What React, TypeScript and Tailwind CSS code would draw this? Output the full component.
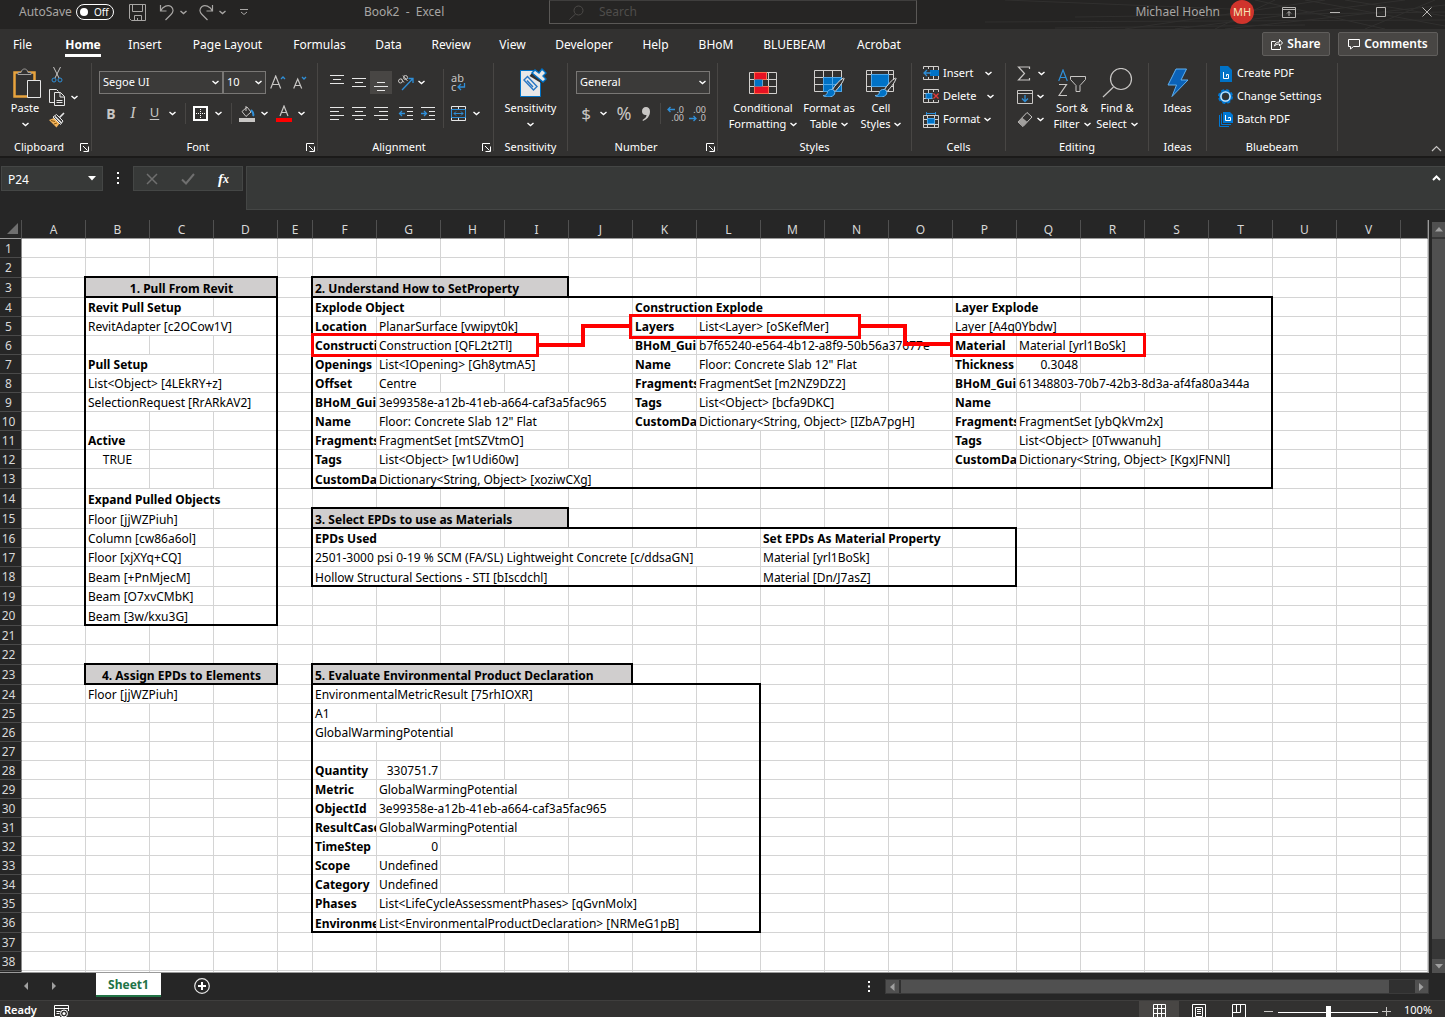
import React from "react";

type Cell = { c: string; t: string; span?: number; b?: boolean; align?: "center" | "right"; fill?: boolean };

const COLS = "ABCDEFGHIJKLMNOPQRSTUVW".split("");
const TALL_ROWS = [2, 3, 13, 14, 15, 18, 20, 22, 23, 36];
const ROWS = Array.from({ length: 39 }, (_, i) => i + 1);

// Outlined ranges: first column, first row, last column, last row.
const BOXES: [string, number, string, number][] = [
  ["B", 3, "D", 3],
  ["B", 4, "D", 20],
  ["F", 3, "I", 3],
  ["F", 4, "T", 13],
  ["F", 15, "I", 15],
  ["F", 16, "P", 18],
  ["B", 23, "D", 23],
  ["F", 23, "J", 23],
  ["F", 24, "L", 36],
];

const h = (c: string, t: string, span = 1): Cell => ({ c, t, span, b: true });
const v = (c: string, t: string, span = 1): Cell => ({ c, t, span });

const DATA: Record<number, Cell[]> = {
  3: [
    { c: "B", t: "1. Pull From Revit", span: 3, b: true, align: "center", fill: true },
    { c: "F", t: "2. Understand How to SetProperty", span: 4, b: true, fill: true },
  ],
  4: [h("B", "Revit Pull Setup", 2), h("F", "Explode Object", 2), h("K", "Construction Explode", 3), h("P", "Layer Explode", 2)],
  5: [
    v("B", "RevitAdapter [c2OCow1V]", 3),
    h("F", "Location"),
    v("G", "PlanarSurface [vwipyt0k]", 3),
    h("K", "Layers"),
    v("L", "List<Layer> [oSKefMer]", 3),
    v("P", "Layer [A4q0Ybdw]", 2),
  ],
  6: [
    h("F", "Construction"),
    v("G", "Construction [QFL2t2Tl]", 3),
    h("K", "BHoM_Guid"),
    v("L", "b7f65240-e564-4b12-a8f9-50b56a37677e", 4),
    h("P", "Material"),
    v("Q", "Material [yrl1BoSk]", 2),
  ],
  7: [
    h("B", "Pull Setup", 2),
    h("F", "Openings"),
    v("G", "List<IOpening> [Gh8ytmA5]", 3),
    h("K", "Name"),
    v("L", 'Floor: Concrete Slab 12" Flat', 3),
    h("P", "Thickness"),
    { c: "Q", t: "0.3048", align: "right" },
  ],
  8: [
    v("B", "List<Object> [4LEkRY+z]", 3),
    h("F", "Offset"),
    v("G", "Centre"),
    h("K", "Fragments"),
    v("L", "FragmentSet [m2NZ9DZ2]", 3),
    h("P", "BHoM_Guid"),
    v("Q", "61348803-70b7-42b3-8d3a-af4fa80a344a", 4),
  ],
  9: [
    v("B", "SelectionRequest [RrARkAV2]", 3),
    h("F", "BHoM_Guid"),
    v("G", "3e99358e-a12b-41eb-a664-caf3a5fac965", 4),
    h("K", "Tags"),
    v("L", "List<Object> [bcfa9DKC]", 3),
    h("P", "Name"),
  ],
  10: [
    h("F", "Name"),
    v("G", 'Floor: Concrete Slab 12" Flat', 3),
    h("K", "CustomData"),
    v("L", "Dictionary<String, Object> [IZbA7pgH]", 4),
    h("P", "Fragments"),
    v("Q", "FragmentSet [ybQkVm2x]", 3),
  ],
  11: [
    h("B", "Active"),
    h("F", "Fragments"),
    v("G", "FragmentSet [mtSZVtmO]", 3),
    h("P", "Tags"),
    v("Q", "List<Object> [0Twwanuh]", 3),
  ],
  12: [
    { c: "B", t: "TRUE", align: "center" },
    h("F", "Tags"),
    v("G", "List<Object> [w1Udi60w]", 3),
    h("P", "CustomData"),
    v("Q", "Dictionary<String, Object> [KgxJFNNl]", 4),
  ],
  13: [h("F", "CustomData"), v("G", "Dictionary<String, Object> [xoziwCXg]", 4)],
  14: [h("B", "Expand Pulled Objects", 3)],
  15: [v("B", "Floor [jjWZPiuh]", 2), { c: "F", t: "3. Select EPDs to use as Materials", span: 4, b: true, fill: true }],
  16: [v("B", "Column [cw86a6ol]", 2), h("F", "EPDs Used", 2), h("M", "Set EPDs As Material Property", 3)],
  17: [
    v("B", "Floor [xjXYq+CQ]", 2),
    v("F", "2501-3000 psi 0-19 % SCM (FA/SL) Lightweight Concrete [c/ddsaGN]", 7),
    v("M", "Material [yrl1BoSk]", 2),
  ],
  18: [v("B", "Beam [+PnMjecM]", 2), v("F", "Hollow Structural Sections - STI [bIscdchl]", 4), v("M", "Material [Dn/J7asZ]", 2)],
  19: [v("B", "Beam [O7xvCMbK]", 2)],
  20: [v("B", "Beam [3w/kxu3G]", 2)],
  23: [
    { c: "B", t: "4. Assign EPDs to Elements", span: 3, b: true, align: "center", fill: true },
    { c: "F", t: "5. Evaluate Environmental Product Declaration", span: 5, b: true, fill: true },
  ],
  24: [v("B", "Floor [jjWZPiuh]", 2), v("F", "EnvironmentalMetricResult [75rhIOXR]", 4)],
  25: [v("F", "A1")],
  26: [v("F", "GlobalWarmingPotential", 3)],
  28: [h("F", "Quantity"), { c: "G", t: "330751.7", align: "right" }],
  29: [h("F", "Metric"), v("G", "GlobalWarmingPotential", 3)],
  30: [h("F", "ObjectId"), v("G", "3e99358e-a12b-41eb-a664-caf3a5fac965", 4)],
  31: [h("F", "ResultCase"), v("G", "GlobalWarmingPotential", 3)],
  32: [h("F", "TimeStep"), { c: "G", t: "0", align: "right" }],
  33: [h("F", "Scope"), v("G", "Undefined")],
  34: [h("F", "Category"), v("G", "Undefined")],
  35: [h("F", "Phases"), v("G", "List<LifeCycleAssessmentPhases> [qGvnMolx]", 5)],
  36: [h("F", "Environment"), v("G", "List<EnvironmentalProductDeclaration> [NRMeG1pB]", 5)],
};

const idx = (c: string) => COLS.indexOf(c);

function edges(first: number, last: number, row: number) {
  let right = false;
  let bottom = false;
  let corner = false;
  for (const [a, r0, z, r1] of BOXES) {
    const c0 = idx(a);
    const c1 = idx(z);
    if (row >= r0 && row <= r1 && (last === c1 || last === c0 - 1)) right = true;
    if (first <= c1 && last >= c0 && (row === r1 || row === r0 - 1)) bottom = true;
    if (last === c0 - 1 && row === r0 - 1) corner = true;
  }
  return { right, bottom, corner };
}

function SheetRow({ row }: { row: number }) {
  const cells: React.ReactNode[] = [];
  const data = DATA[row] || [];
  for (let i = 0; i < COLS.length; ) {
    const cell = data.find((d) => idx(d.c) === i);
    const span = cell?.span ?? 1;
    const e = edges(i, i + span - 1, row);
    const cls = [
      "relative border-r border-b border-[#d4d4d4] p-0",
      e.right ? "after:absolute after:top-0 after:-right-px after:-bottom-px after:w-[2px] after:bg-black" : "",
      e.corner && !e.right ? "after:absolute after:-right-px after:-bottom-px after:h-[2px] after:w-[2px] after:bg-black" : "",
      e.bottom ? "before:absolute before:left-0 before:-right-px before:-bottom-px before:h-[2px] before:bg-black" : "",
      cell?.fill ? "bg-[#d0cece]" : "",
      cell?.b ? "font-bold" : "",
    ].join(" ");
    const align = cell?.align === "center" ? "text-center" : cell?.align === "right" ? "pr-[2px] text-right" : "pl-[2px]";
    cells.push(
      <td key={i} colSpan={span} className={cls}>
        {cell && <div className={"overflow-hidden pt-[2px] leading-4 whitespace-nowrap " + align}>{cell.t}</div>}
      </td>
    );
    i += span;
  }
  return (
    <tr className={TALL_ROWS.includes(row) ? "h-[20px]" : "h-[19px]"}>
      <th
        scope="row"
        className="border-r border-b border-r-[#8c8c8c] border-b-[#4a4a4a] bg-[#262626] p-0 pt-px pr-1 text-center text-[12px] leading-4 font-normal text-[#d8d8d8]"
      >
        {row < 39 ? row : ""}
      </th>
      {cells}
    </tr>
  );
}

function Caret({ className = "text-white" }: { className?: string }) {
  return (
    <svg width="7" height="5" viewBox="0 0 7 5" fill="none" stroke="currentColor" strokeWidth="1.4" className={"shrink-0 " + className}>
      <path d="M.5 1l3 2.5 3-2.5" />
    </svg>
  );
}

function Svg({ w, h, children, className = "" }: { w: number; h: number; children: React.ReactNode; className?: string }) {
  return (
    <svg width={w} height={h} viewBox={`0 0 ${w} ${h}`} fill="none" className={"shrink-0 " + className}>
      {children}
    </svg>
  );
}

function Btn({ label, className = "", children }: { label: string; className?: string; children: React.ReactNode }) {
  return (
    <button type="button" aria-label={label} className={"flex shrink-0 items-center justify-center " + className}>
      {children}
    </button>
  );
}

function Group({ label, width, launcher, children }: { label: string; width: string; launcher?: boolean; children: React.ReactNode }) {
  return (
    <section aria-label={label} className={"flex shrink-0 " + width}>
      <div className="flex min-w-0 flex-1 flex-col">
        <div className="flex h-[77px]">{children}</div>
        <div className="flex h-4 items-center">
          <span className="flex-1 text-center text-[11px] leading-4">{label}</span>
          {launcher && (
            <Btn label={label + " settings"} className="mr-px w-[12px]">
              <Svg w={9} h={9}>
                <path d="M.5 8V.5H8M3 3l4.5 4.5M8.5 3.500v5h-5" stroke="#fff" />
              </Svg>
            </Btn>
          )}
        </div>
      </div>
      <div className="mt-px h-[88px] w-px bg-[#484644]" />
    </section>
  );
}

function Big({ icon, lines, caret, className }: { icon: React.ReactNode; lines: string[]; caret?: boolean; className: string }) {
  return (
    <button type="button" className={"flex shrink-0 flex-col items-center pt-[4px] text-[11px] leading-4 whitespace-nowrap " + className}>
      <span className="flex h-[34px] items-center">{icon}</span>
      {lines.map((l, i) => (
        <span key={i} className="flex h-4 items-center gap-1">
          {l}
          {caret && i === lines.length - 1 && <Caret />}
        </span>
      ))}
    </button>
  );
}

function Small({ icon, label, caret, gap = "gap-1" }: { icon: React.ReactNode; label: string; caret?: boolean; gap?: string }) {
  return (
    <button type="button" className={"flex h-[23px] items-center text-[11px] whitespace-nowrap " + gap}>
      <span className="flex items-center gap-1">
        {icon}
        {label}
      </span>
      {caret && <Caret />}
    </button>
  );
}

function Lines({ rows }: { rows: [number, number, number][] }) {
  return (
    <Svg w={16} h={16}>
      {rows.map(([x, y, w]) => (
        <path key={y} d={`M${x} ${y}.5h${w}`} stroke="#e6e6e6" />
      ))}
    </Svg>
  );
}

const TABS: [string, string][] = [
  ["File", "w-[45px]"],
  ["Home", "w-[76px]"],
  ["Insert", "w-[48px]"],
  ["Page Layout", "w-[117px]"],
  ["Formulas", "w-[67px]"],
  ["Data", "w-[71px]"],
  ["Review", "w-[54px]"],
  ["View", "w-[69px]"],
  ["Developer", "w-[74px]"],
  ["Help", "w-[69px]"],
  ["BHoM", "w-[52px]"],
  ["BLUEBEAM", "w-[105px]"],
  ["Acrobat", "w-[64px]"],
];

function TitleBar() {
  return (
    <header className="relative flex h-[29px] shrink-0 items-start bg-[#252423] text-[12px] text-[#a8a6a4]">
      <svg className="absolute top-0 right-0" width="520" height="29" viewBox="0 0 520 29" fill="none" stroke="#31302f" aria-hidden="true">
        <path d="M80 0L330 10M150 17L520 12M60 22L520 20M130 28L380 25M200 29L400 0M250 29L480 0M300 29L520 5M330 0L460 29M380 0L520 26M420 0L520 16M290 29L350 0M440 29L510 0" />
      </svg>
      <div className="relative flex h-6 w-[549px] shrink-0 items-center">
        <label className="ml-[19px] flex items-center gap-1">
          AutoSave
          <input type="checkbox" className="sr-only" />
          <span className="flex h-[16px] w-[38px] items-center gap-[6px] rounded-full border border-white pl-[3px] text-[10px] text-white">
            <span className="h-[8px] w-[8px] rounded-full bg-white" />
            Off
          </span>
        </label>
        <Btn label="Save" className="ml-[15px]">
          <Svg w={17} h={17}>
            <path d="M.5.5h16v16h-14l-2-2zM3.500.5v7h10v-7M5.500 16.500v-5h7v5M8.500 14v2" stroke="#a8a6a4" />
          </Svg>
        </Btn>
        <Btn label="Undo" className="ml-[13px]">
          <Svg w={16} h={17}>
            <path d="M1.500 1v6h6M1.500 7C4 2 9 .5 12 2.500c3 2.500 2.500 5.500 0 8L6.500 16" stroke="#a8a6a4" strokeWidth="1.200" />
          </Svg>
        </Btn>
        <Caret className="ml-[5px] text-[#a8a6a4]" />
        <Btn label="Redo" className="ml-[11px]">
          <Svg w={16} h={17}>
            <path d="M14.500 1v6h-6M14.500 7C12 2 7 .5 4 2.500c-3 2.500-2.500 5.500 0 8L9.500 16" stroke="#a8a6a4" strokeWidth="1.200" />
          </Svg>
        </Btn>
        <Caret className="ml-[5px] text-[#a8a6a4]" />
        <Btn label="Customize Quick Access Toolbar" className="ml-[14px]">
          <Svg w={8} h={8}>
            <path d="M0 1.500h8M1 4l3 2.500L7 4" stroke="#a8a6a4" />
          </Svg>
        </Btn>
        <h1 className="ml-[116px] whitespace-pre">Book2{"  -  "}Excel</h1>
      </div>
      <label className="relative flex h-6 w-[368px] shrink-0 items-center border border-[#5a5856] border-t-[#3f3e3d] bg-[#262524] pl-[19px]">
        <Svg w={15} h={15}>
          <circle cx="9.500" cy="5.500" r="4.500" stroke="#4c4a48" />
          <path d="M6.500 9L.5 14.500" stroke="#4c4a48" />
        </Svg>
        <span className="sr-only">Search</span>
        <input type="search" placeholder="Search" className="ml-[15px] w-40 bg-transparent outline-none placeholder:text-[#4f4d4b]" />
      </label>
      <div className="relative flex h-6 flex-1 items-center justify-end pr-[13px]">
        <span>Michael Hoehn</span>
        <span className="ml-[10px] flex h-6 w-6 items-center justify-center rounded-full bg-[#d0342c] text-[11px] text-[#f7e3b5]">MH</span>
        <Btn label="Ribbon Display Options" className="ml-[28px]">
          <Svg w={14} h={11}>
            <path d="M.5.5h13v10H.5zM.5 2.500h13M7 9V4.500M5 6.500l2-2 2 2" stroke="#b8b6b4" />
          </Svg>
        </Btn>
        <Btn label="Minimize" className="ml-[34px]">
          <Svg w={10} h={10}>
            <path d="M0 5.500h10" stroke="#b8b6b4" />
          </Svg>
        </Btn>
        <Btn label="Maximize" className="ml-[36px]">
          <Svg w={10} h={10}>
            <path d="M.5.5h9v9h-9z" stroke="#b8b6b4" />
          </Svg>
        </Btn>
        <Btn label="Close" className="ml-[36px]">
          <Svg w={10} h={10}>
            <path d="M.5.5l9 9M9.500.5l-9 9" stroke="#b8b6b4" />
          </Svg>
        </Btn>
      </div>
    </header>
  );
}

function TabBar() {
  return (
    <nav className="flex h-[33px] shrink-0 items-start bg-[#323130]">
      {TABS.map(([t, w]) => (
        <a key={t} href="#" className={"mt-1 flex shrink-0 justify-center text-[12px] whitespace-nowrap " + w}>
          <span className={"flex h-6 items-center border-b-[3px] pt-[2px] " + (t === "Home" ? "border-white font-bold" : "border-transparent")}>{t}</span>
        </a>
      ))}
      <div className="mt-[3px] mr-[7px] ml-auto flex gap-2">
        <button type="button" className="flex h-6 w-[68px] items-center justify-center gap-1 rounded-[2px] border border-[#605e5c] bg-[#484644] text-[12px] font-semibold">
          <Svg w={12} h={12}>
            <path d="M4.500 3.500h-4v8h9v-3M3.500 8c.5-3 2.500-4 5-4V1.500L11.500 5 8.500 8V6C6.500 6 5 6.500 3.500 8z" stroke="#fff" />
          </Svg>
          Share
        </button>
        <button type="button" className="flex h-6 w-[100px] items-center justify-center gap-1 rounded-[2px] border border-[#605e5c] bg-[#484644] text-[12px] font-semibold">
          <Svg w={12} h={11}>
            <path d="M.5.5h11v7H5.500l-3 2.500V7.500h-2z" stroke="#fff" />
          </Svg>
          Comments
        </button>
      </div>
    </nav>
  );
}

function Combo({ value, label, width }: { value: string; label: string; width: string }) {
  return (
    <div className={"relative flex h-[23px] items-center border border-[#797775] bg-[#3b3a39] " + width}>
      <select aria-label={label} className="h-full w-full appearance-none pl-[3px] text-[11px] outline-none" defaultValue={value}>
        <option>{value}</option>
      </select>
      <Caret className="pointer-events-none absolute right-[3px]" />
    </div>
  );
}

const Brush = () => (
  <g>
    <path d="M29.500 9c-4 2-9 8-11 11.500l2.500 2c3-3 8-9 9-13z" fill="#323130" stroke="#e6e6e6" />
    <path d="M18.500 20.500c-3-.5-5 1-5.500 4-.5 1.500-2 2-4 2 3 2.500 10 2 11.500-1.500.7-1.800.2-3.500-2-4.500z" fill="#0072c6" stroke="#6cb8f0" />
  </g>
);

function Ribbon() {
  return (
    <div className="flex h-[94px] shrink-0 bg-[#323130] text-white">
      <Group label="Clipboard" width="w-[92px]" launcher>
        <Big
          className="ml-1 w-[42px]"
          caret
          lines={["Paste", ""]}
          icon={
            <Svg w={28} h={31} className="ml-[4px]">
              <path d="M1.500 4.500h20v24h-20z" fill="#323130" stroke="#e8a33d" strokeWidth="2.500" />
              <path d="M5 6.500V4.500h3C8.500 2 10 1 11.500 1s3 1 3.500 3.500h3v2z" fill="#323130" stroke="#a19f9d" />
              <path d="M14.500 12.500h13v17h-13z" fill="#323130" stroke="#e6e6e6" />
            </Svg>
          }
        />
        <div className="flex flex-col items-start gap-[6px] pt-[5px] pl-[3px]">
          <Btn label="Cut" className="pl-[2px]">
            <Svg w={12} h={16}>
              <path d="M2.500 0l5.500 11M9.500 0L4 11" stroke="#c8c6c4" />
              <circle cx="3" cy="13" r="2" stroke="#2f8fd8" />
              <circle cx="9" cy="13" r="2" stroke="#2f8fd8" />
            </Svg>
          </Btn>
          <div className="flex items-center gap-[6px]">
            <Btn label="Copy">
              <Svg w={16} h={17}>
                <path d="M5.500 13.500h-5V.5h7l2 2" stroke="#e6e6e6" />
                <path d="M5.500 3.500h6l4 4v9h-10zM11 3.500v4.500h4.500M7.500 11.500h6M7.500 13.500h6" fill="#323130" stroke="#e6e6e6" />
              </Svg>
            </Btn>
            <Caret />
          </div>
          <Btn label="Format Painter">
            <Svg w={16} h={16}>
              <path d="M0 8l5-2 5.500 5.500L7.500 15.500z" fill="#f2b35a" />
              <path d="M2 8.500l4 1M5 12l3-1" stroke="#8a5710" />
              <path d="M4 5l7.500 7.500 2.500-3.500-6.500-6.500z" fill="#323130" stroke="#e6e6e6" />
              <path d="M6 4.500l6.500 6.500M10.500 5.500L15 1" stroke="#e6e6e6" strokeWidth="1.600" />
            </Svg>
          </Btn>
        </div>
      </Group>

      <Group label="Font" width="w-[226px]" launcher>
        <div className="flex flex-col pt-[9px] pl-[7px]">
          <div className="flex items-center">
            <Combo label="Font" value="Segoe UI" width="w-[124px]" />
            <Combo label="Font size" value="10" width="w-[43px]" />
            <Btn label="Increase Font Size" className="ml-[4px]">
              <Svg w={16} h={16}>
                <path d="M.7 13.500L5.700 1l5 12.500M2.500 9.500h6.500" stroke="#c8c6c4" strokeWidth="1.200" />
                <path d="M11 4l2-2 2 2" stroke="#2f8fd8" strokeWidth="1.300" />
              </Svg>
            </Btn>
            <Btn label="Decrease Font Size" className="ml-[7px]">
              <Svg w={16} h={16}>
                <path d="M.7 13.500L4.700 4l4 9.500M2 10.500h5.500" stroke="#c8c6c4" strokeWidth="1.200" />
                <path d="M9 2l2 2 2-2" stroke="#2f8fd8" strokeWidth="1.300" />
              </Svg>
            </Btn>
          </div>
          <div className="mt-[8px] flex h-[22px] items-center text-[14px] text-[#c8c6c4]">
            <Btn label="Bold" className="w-[24px] font-bold">B</Btn>
            <Btn label="Italic" className="w-[20px] font-['Liberation_Serif'] text-[16px] italic">I</Btn>
            <Btn label="Underline" className="w-[23px] text-[13px] underline underline-offset-2">U</Btn>
            <Caret className="ml-[3px] text-white" />
            <div className="mr-[7px] ml-[9px] h-[21px] w-px bg-[#484644]" />
            <Btn label="Borders">
              <Svg w={15} h={15}>
                <path d="M1 1h13v13H1z" stroke="#fff" strokeWidth="2" />
                <path d="M7.500 3v10M3 7.500h10" stroke="#fff" strokeDasharray="1 1" />
              </Svg>
            </Btn>
            <Caret className="ml-[7px] text-white" />
            <div className="mr-[7px] ml-[9px] h-[21px] w-px bg-[#484644]" />
            <Btn label="Fill Color">
              <Svg w={16} h={17}>
                <path d="M3 6.500L8 2l4 5-5 4.500zM7 1v5" stroke="#c8c6c4" />
                <path d="M12 5c2 2 3 4 2 6" stroke="#2f8fd8" strokeWidth="2" />
                <path d="M0 13h16v4H0z" fill="#c8c6c4" />
              </Svg>
            </Btn>
            <Caret className="ml-[6px] text-white" />
            <Btn label="Font Color" className="ml-[8px]">
              <Svg w={16} h={17}>
                <path d="M4 11L8 1l4 10M5.500 7.500h5" stroke="#c8c6c4" strokeWidth="1.200" />
                <path d="M0 13h16v4H0z" fill="#ff0000" />
              </Svg>
            </Btn>
            <Caret className="ml-[6px] text-white" />
          </div>
        </div>
      </Group>

      <Group label="Alignment" width="w-[176px]" launcher>
        <div className="flex flex-col pt-[9px] pl-[8px]">
          <div className="flex h-[23px] items-center">
            <Btn label="Top Align" className="h-[23px] w-[22px]">
              <Lines rows={[[1, 0, 14], [4, 4, 8], [1, 8, 14]]} />
            </Btn>
            <Btn label="Middle Align" className="h-[23px] w-[22px]">
              <Lines rows={[[1, 3, 14], [4, 7, 8], [1, 11, 14]]} />
            </Btn>
            <Btn label="Bottom Align" className="h-[23px] w-[22px] bg-[#484644]">
              <Lines rows={[[4, 7, 8], [1, 11, 14], [4, 15, 8]]} />
            </Btn>
            <Btn label="Orientation" className="ml-[5px]">
              <Svg w={18} h={17}>
                <circle cx="3.500" cy="7" r="2" stroke="#c8c6c4" />
                <path d="M4 4.500l3 4M6 1.500l4.500 5.500" stroke="#c8c6c4" />
                <circle cx="8.500" cy="3.500" r="2" stroke="#c8c6c4" />
                <path d="M5 16L16 4.500M11.500 4.500H16V9" stroke="#2f8fd8" strokeWidth="1.300" />
              </Svg>
            </Btn>
            <Caret className="ml-[3px]" />
          </div>
          <div className="mt-[8px] flex h-[23px] items-center">
            <Btn label="Align Left" className="w-[22px]">
              <Lines rows={[[1, 1, 14], [1, 5, 9], [1, 9, 14], [1, 13, 9]]} />
            </Btn>
            <Btn label="Center" className="w-[22px]">
              <Lines rows={[[1, 1, 14], [4, 5, 8], [1, 9, 14], [4, 13, 8]]} />
            </Btn>
            <Btn label="Align Right" className="w-[22px]">
              <Lines rows={[[1, 1, 14], [6, 5, 9], [1, 9, 14], [6, 13, 9]]} />
            </Btn>
            <Btn label="Decrease Indent" className="ml-[3px] w-[22px]">
              <Svg w={16} h={16}>
                <path d="M1 1.500h14M9 5.500h6M9 9.500h6M1 13.500h14" stroke="#e6e6e6" />
                <path d="M7 7.500H1.500M4 5L1.500 7.500 4 10" stroke="#2f8fd8" strokeWidth="1.300" />
              </Svg>
            </Btn>
            <Btn label="Increase Indent" className="w-[22px]">
              <Svg w={16} h={16}>
                <path d="M1 1.500h14M9 5.500h6M9 9.500h6M1 13.500h14" stroke="#e6e6e6" />
                <path d="M1 7.500h5.500M4 5l2.500 2.500L4 10" stroke="#2f8fd8" strokeWidth="1.300" />
              </Svg>
            </Btn>
          </div>
        </div>
        <div className="mt-[7px] ml-[4px] h-[59px] w-px bg-[#484644]" />
        <div className="flex flex-col items-start gap-[15px] pt-[11px] pl-[7px]">
          <Btn label="Wrap Text">
            <span className="relative block h-[18px] w-[15px] text-left text-[11px] leading-[9px] text-[#c8c6c4]">
              ab
              <br />c
              <Svg w={9} h={8} className="absolute right-0 bottom-0">
                <path d="M7.500 0v4H1.500M4 1L1 4l3 3" stroke="#2f8fd8" strokeWidth="1.300" />
              </Svg>
            </span>
          </Btn>
          <div className="flex items-center gap-[7px]">
            <Btn label="Merge &amp; Center">
              <Svg w={15} h={15}>
                <path d="M.5.5h14v14H.5zM7.500.5v3M7.500 11.500v3" stroke="#e6e6e6" />
                <path d="M.5 3.500h14v8H.5zM3 7.500h9M5 5.500l-2 2 2 2M10 5.500l2 2-2 2" fill="#323130" stroke="#2f8fd8" />
              </Svg>
            </Btn>
            <Caret />
          </div>
        </div>
      </Group>

      <Group label="Sensitivity" width="w-[74px]">
        <Big
          className="w-full"
          caret
          lines={["Sensitivity", ""]}
          icon={
            <Svg w={28} h={31} className="ml-[4px]">
              <path d="M1.500 2.500h20v26h-20z" fill="#e8e8e8" stroke="#0072c6" />
              <path d="M5 12l3.500-3.500 9.500 10L14.500 22zM8 12.500l6 6.500" stroke="#2b78c5" strokeWidth="1.400" />
              <path d="M10.500 8L17 0h11v15h-6z" fill="#323130" />
              <path d="M13 5l3-3 4 3 3-4 4 4-3 3 3 3-3 3z" fill="#e8e8e8" stroke="#0072c6" strokeWidth="1.400" />
            </Svg>
          }
        />
      </Group>

      <Group label="Number" width="w-[150px]" launcher>
        <div className="flex flex-col pt-[9px] pl-[8px]">
          <Combo label="Number Format" value="General" width="w-[134px]" />
          <div className="mt-[8px] flex h-[23px] items-center text-[#c8c6c4]">
            <Btn label="Accounting Number Format" className="w-[20px] text-[17px]">$</Btn>
            <Caret className="ml-[4px] text-white" />
            <Btn label="Percent Style" className="ml-[7px] w-[20px] text-[18px]">%</Btn>
            <Btn label="Comma Style" className="ml-[4px] w-[16px]">
              <Svg w={10} h={14}>
                <path d="M5 0c2.500 0 4 1.500 4 4.500C9 9 6 12.500 2 14l-.5-1C4 11.500 5.500 10 5.500 8 3 8.500 1 7 1 4.500 1 1.500 2.500 0 5 0z" fill="#c8c6c4" />
              </Svg>
            </Btn>
            <div className="mx-[6px] h-[21px] w-px bg-[#484644]" />
            <Btn label="Increase Decimal" className="relative h-[16px] w-[17px] flex-col !items-end text-[9px] leading-[8px]">
              <span>.0</span>
              <span>.00</span>
              <Svg w={8} h={7} className="absolute top-0 left-0">
                <path d="M8 3.500H1M3.500 1L1 3.500 3.500 6" stroke="#2f8fd8" strokeWidth="1.300" />
              </Svg>
            </Btn>
            <Btn label="Decrease Decimal" className="relative ml-[5px] h-[16px] w-[17px] flex-col !items-end text-[9px] leading-[8px]">
              <span>.00</span>
              <span>.0</span>
              <Svg w={8} h={7} className="absolute bottom-0 left-0">
                <path d="M0 3.500h7M4.500 1L7 3.500 4.500 6" stroke="#2f8fd8" strokeWidth="1.300" />
              </Svg>
            </Btn>
          </div>
        </div>
      </Group>

      <Group label="Styles" width="w-[194px]">
        <Big
          className="ml-[8px] w-[74px]"
          caret
          lines={["Conditional", "Formatting"]}
          icon={
            <Svg w={28} h={24}>
              <path d="M.5 1.500h27v21H.5zM.5 8.500h27M.5 15.500h27M5.500 1.500v21M13.500 1.500v21M19.500 1.500v21" stroke="#d2d0ce" />
              <path d="M5.500 1.500h12v7h-12zM5.500 15.500h14v7h-14z" fill="#e81123" stroke="#ff6a4d" />
              <path d="M5.500 8.500h8v7h-8z" fill="#0072c6" />
            </Svg>
          }
        />
        <Big
          className="w-[58px]"
          caret
          lines={["Format as", "Table"]}
          icon={
            <Svg w={31} h={28}>
              <path d="M.5 1.500h27v21H.5zM.5 8.500h27M.5 15.500h27M9.500 1.500v21M18.500 1.500v21" stroke="#d2d0ce" />
              <path d="M9.500 8.500h18v14h-18zM9.500 15.500h18M18.500 8.500v14" fill="#0072c6" stroke="#4da6e8" />
              <Brush />
            </Svg>
          }
        />
        <Big
          className="w-[46px]"
          caret
          lines={["Cell", "Styles"]}
          icon={
            <Svg w={31} h={28}>
              <path d="M.5 1.500h27v21H.5zM.5 5.500h27M.5 17.500h27M5.500 1.500v21M22.500 1.500v21" stroke="#d2d0ce" />
              <path d="M5.500 5.500h17v12h-17z" fill="#0072c6" stroke="#4da6e8" />
              <Brush />
            </Svg>
          }
        />
      </Group>

      <Group label="Cells" width="w-[94px]">
        <div className="flex flex-col items-start pl-[11px]">
          <Small
            label="Insert"
            caret
            gap="gap-[11px]"
            icon={
              <Svg w={16} h={15}>
                <path d="M.5.5h15v13H.5zM5.500.5v13M10.500.5v13M.5 4.500h15M.5 9.500h15" stroke="#d2d0ce" />
                <path d="M7 4h9v6H7z" fill="#0072c6" />
                <path d="M0 3h7v8H0z" fill="#323130" />
                <path d="M8 7H1M4 4L1 7l3 3" stroke="#2f8fd8" strokeWidth="1.300" />
              </Svg>
            }
          />
          <Small
            label="Delete"
            caret
            gap="gap-[11px]"
            icon={
              <Svg w={16} h={15}>
                <path d="M.5.5h15v13H.5zM5.500.5v13M10.500.5v13M.5 4.500h15M.5 9.500h15" stroke="#d2d0ce" />
                <path d="M3 4.500h6v5H3z" fill="#0072c6" stroke="#4da6e8" />
                <path d="M9.500 3h7v8h-7z" fill="#323130" />
                <path d="M10.500 4.500l5 5M15.500 4.500l-5 5" stroke="#e03a3a" strokeWidth="1.400" />
              </Svg>
            }
          />
          <Small
            label="Format"
            caret
            icon={
              <Svg w={16} h={16}>
                <path d="M3.500 0v3M12.500 0v3M3.500 1.500h9" stroke="#2f8fd8" />
                <path d="M.5 3.500h15v12H.5zM4.500 3.500v12M11.500 3.500v12M.5 7.500h15M.5 12.500h15" stroke="#d2d0ce" />
                <path d="M4.500 6.500h7v5h-7z" fill="#0072c6" stroke="#4da6e8" />
              </Svg>
            }
          />
        </div>
      </Group>

      <Group label="Editing" width="w-[143px]">
        <div className="flex w-[41px] flex-col pl-[11px]">
          <div className="flex h-[23px] items-center gap-[7px]">
            <Btn label="AutoSum">
              <Svg w={14} h={15}>
                <path d="M12.500 3V1H1.500l6 6.500-6 6.500h11v-2" stroke="#c8c6c4" strokeWidth="1.200" />
              </Svg>
            </Btn>
            <Caret />
          </div>
          <div className="flex h-[23px] items-center gap-1">
            <Btn label="Fill">
              <Svg w={16} h={14}>
                <path d="M.5.5h15v13H.5zM.5 3.500h15" stroke="#c8c6c4" />
                <path d="M8 5v6.500M5 8.500l3 3 3-3" stroke="#2f8fd8" strokeWidth="1.300" />
              </Svg>
            </Btn>
            <Caret />
          </div>
          <div className="flex h-[23px] items-center gap-1">
            <Btn label="Clear">
              <Svg w={16} h={15}>
                <path d="M1 10l9-9.500 5 4.500-9 9.500z" stroke="#c8c6c4" />
                <path d="M1 10l4-4.500 5.500 4.500L6 14.500z" fill="#a19f9d" />
              </Svg>
            </Btn>
            <Caret />
          </div>
        </div>
        <Big
          className="ml-[3px] w-[44px]"
          caret
          lines={["Sort &", "Filter"]}
          icon={
            <Svg w={28} h={28}>
              <path d="M.7 12L5 1l4.300 11M2.200 8.500h5.600" stroke="#2f8fd8" strokeWidth="1.200" />
              <path d="M1 15.500h7.500L1 26.500h8" stroke="#c8c6c4" strokeWidth="1.200" />
              <path d="M12.500 7.500h15v3l-5.500 6v6h-4v-6l-5.500-6z" stroke="#c8c6c4" />
            </Svg>
          }
        />
        <Big
          className="w-[46px]"
          caret
          lines={["Find &", "Select"]}
          icon={
            <Svg w={31} h={30}>
              <circle cx="19" cy="11" r="10.500" stroke="#c8c6c4" strokeWidth="1.200" />
              <path d="M11.500 19L1 29" stroke="#c8c6c4" strokeWidth="1.200" />
            </Svg>
          }
        />
      </Group>

      <Group label="Ideas" width="w-[58px]">
        <Big
          className="w-full"
          lines={["Ideas"]}
          icon={
            <Svg w={22} h={30}>
              <path d="M9 1h10.500L14 12h7L5 28.500 9.500 17H1z" fill="#0b62b8" stroke="#5fb0f0" />
            </Svg>
          }
        />
      </Group>

      <Group label="Bluebeam" width="w-[131px]">
        <div className="flex flex-col items-start pl-[11px]">
          <Small
            label="Create PDF"
            icon={
              <Svg w={15} h={16}>
                <path d="M2 0h8l4 4v12H2z" fill="#0072c6" />
                <path d="M5.500 6v6.500h5V8.500h-2v2" stroke="#fff" />
              </Svg>
            }
          />
          <Small
            label="Change Settings"
            icon={
              <Svg w={15} h={15}>
                <circle cx="7.500" cy="7.500" r="6.500" stroke="#0078d4" strokeWidth="2" strokeDasharray="3 2.100" />
                <circle cx="7.500" cy="7.500" r="5" stroke="#0078d4" strokeWidth="3" />
                <circle cx="7.500" cy="7.500" r="4.600" stroke="#dcecf8" strokeWidth="1.400" />
              </Svg>
            }
          />
          <Small
            label="Batch PDF"
            icon={
              <Svg w={15} h={16}>
                <path d="M1.500 3v11.500H11M3.500 1.500v11H13" stroke="#0078d4" />
                <path d="M5 0h7l3 3v8H5z" fill="#0078d4" />
                <path d="M7.500 3v5.500h5V5.500h-2v1" stroke="#fff" />
              </Svg>
            }
          />
        </div>
      </Group>
      <Btn label="Collapse the Ribbon" className="mt-auto mr-[3px] mb-[4px] ml-auto">
        <Svg w={11} h={7}>
          <path d="M1 6l4.500-4.500L10 6" stroke="#c8c6c4" strokeWidth="1.200" />
        </Svg>
      </Btn>
    </div>
  );
}

function FormulaBar() {
  return (
    <div className="flex h-[64px] shrink-0 items-start border-t-2 border-[#1b1a19] bg-[#262626] pt-[8px] pl-px">
      <label className="flex h-[25px] w-[102px] items-center border border-[#444645] bg-[#373938] pr-[6px] pl-[6px]">
        <span className="sr-only">Name Box</span>
        <input defaultValue="P24" className="h-full min-w-0 flex-1 bg-transparent pt-[2px] text-[12px] outline-none" />
        <Svg w={8} h={5}>
          <path d="M0 0h8L4 4.500z" fill="#fff" />
        </Svg>
      </label>
      <Svg w={2} h={12} className="mt-[6px] ml-[14px]">
        <path d="M0 0h2v2H0zM0 5h2v2H0zM0 10h2v2H0z" fill="#fff" />
      </Svg>
      <div className="ml-[14px] flex h-[25px] w-[110px] items-center border border-[#444645] bg-[#373938] pl-[12px]">
        <Btn label="Cancel">
          <Svg w={12} h={12}>
            <path d="M1 1l10 10M11 1L1 11" stroke="#6f6f6f" strokeWidth="1.500" />
          </Svg>
        </Btn>
        <Btn label="Enter" className="ml-[23px]">
          <Svg w={14} h={12}>
            <path d="M1 6.500l4 4L13 1" stroke="#6f6f6f" strokeWidth="2" />
          </Svg>
        </Btn>
        <Btn label="Insert Function" className="ml-[23px] font-['Liberation_Serif'] text-[15px] leading-4 font-bold italic">
          f<span className="text-[12px]">x</span>
        </Btn>
      </div>
      <div className="ml-[3px] flex h-[44px] flex-1 items-start border border-r-0 border-[#444645] bg-[#373938]">
        <textarea aria-label="Formula Bar" className="h-full flex-1 resize-none bg-transparent px-1 outline-none" />
        <Svg w={9} h={6} className="mt-[8px] mr-[4px]">
          <path d="M1 5l3.500-3.500L8 5" stroke="#fff" strokeWidth="2" />
        </Svg>
      </div>
    </div>
  );
}

function Sheet() {
  return (
    <div className="flex min-h-0 flex-1 bg-[#262626]">
      <div className="relative min-w-0 flex-1 overflow-hidden border-r border-b border-[#9a9a9a] bg-white">
        <table className="w-full table-fixed border-separate border-spacing-0 text-[12px] text-black">
          <colgroup>
            <col className="w-[22px]" />
            {COLS.map((c) => (
              <col key={c} className={c === "W" ? "" : c === "E" ? "w-[35px]" : "w-[64px]"} />
            ))}
          </colgroup>
          <thead>
            <tr className="h-[19px] bg-[#262626]">
              <th className="border-r border-b border-r-[#505050] border-b-[#9a9a9a] p-0 align-bottom" aria-label="Select all">
                <Svg w={12} h={12} className="mb-[3px] ml-[7px]">
                  <path d="M11 0v11H0z" fill="#6e6e6e" />
                </Svg>
              </th>
              {COLS.map((c) => (
                <th
                  key={c}
                  scope="col"
                  className="border-r border-b border-r-[#505050] border-b-[#9a9a9a] p-0 pt-[2px] text-center leading-4 font-normal text-[#d8d8d8]"
                >
                  {c === "W" ? "" : c}
                </th>
              ))}
            </tr>
          </thead>
          <tbody>
            {ROWS.map((r) => (
              <SheetRow key={r} row={r} />
            ))}
          </tbody>
        </table>
        <svg className="pointer-events-none absolute top-0 left-0" width="1200" height="200" fill="none" stroke="#ff0000" aria-hidden="true">
          <g strokeWidth="3">
            <rect x="312.500" y="114.500" width="225" height="21" />
            <rect x="630.500" y="95.500" width="229" height="22" />
            <rect x="951.500" y="114.500" width="193" height="21" />
          </g>
          <path d="M539 125h44v-19h47M861 106h44v18h45" strokeWidth="4" />
        </svg>
      </div>
      <div className="mt-[2px] ml-[3px] flex w-[13px] flex-col bg-[#363636]">
        <Btn label="Scroll up" className="h-[15px] bg-[#505050]">
          <Svg w={8} h={5}>
            <path d="M0 4.500h8L4 0z" fill="#a0a0a0" />
          </Svg>
        </Btn>
        <div className="mt-[2px] h-[700px] shrink bg-[#505050]" />
        <Btn label="Scroll down" className="mt-auto h-[14px] bg-[#505050]">
          <Svg w={8} h={5}>
            <path d="M0 0h8L4 4.500z" fill="#a0a0a0" />
          </Svg>
        </Btn>
      </div>
    </div>
  );
}

function SheetTabs() {
  return (
    <div className="flex h-[27px] shrink-0 items-start bg-[#262626]">
      <Btn label="Previous sheet" className="mt-[9px] ml-[24px]">
        <Svg w={5} h={8}>
          <path d="M4 0v8L0 4z" fill="#a0a0a0" />
        </Svg>
      </Btn>
      <Btn label="Next sheet" className="mt-[9px] ml-[23px]">
        <Svg w={5} h={8}>
          <path d="M0 0v8l4-4z" fill="#a0a0a0" />
        </Svg>
      </Btn>
      <button type="button" className="-mt-px ml-[39px] flex h-[25px] w-[65px] items-center justify-center border-b-2 border-[#217346] bg-white pt-[2px] text-[12px] font-bold text-[#217346]">
        Sheet1
      </button>
      <Btn label="New sheet" className="mt-[5px] ml-[33px]">
        <Svg w={16} h={16}>
          <circle cx="8" cy="8" r="7.300" stroke="#e6e6e6" strokeWidth="1.200" />
          <path d="M8 4v8M4 8h8" stroke="#fff" strokeWidth="2" />
        </Svg>
      </Btn>
      <Svg w={2} h={11} className="mt-[8px] ml-auto">
        <path d="M0 0h2v2H0zM0 4.500h2v2H0zM0 9h2v2H0z" fill="#fff" />
      </Svg>
      <div className="mt-[6px] mr-[16px] ml-[15px] flex h-[15px] w-[544px] border border-[#3a3a3a] bg-[#303030]">
        <Btn label="Scroll left" className="w-[13px] bg-[#505050]">
          <Svg w={5} h={8}>
            <path d="M4.500 0v8L0 4z" fill="#a0a0a0" />
          </Svg>
        </Btn>
        <div className="ml-[2px] w-[488px] bg-[#505050]" />
        <Btn label="Scroll right" className="ml-auto w-[13px] bg-[#505050]">
          <Svg w={5} h={8}>
            <path d="M0 0v8l4.500-4z" fill="#a0a0a0" />
          </Svg>
        </Btn>
      </div>
    </div>
  );
}

function StatusBar() {
  return (
    <footer className="flex h-[17px] shrink-0 items-start overflow-hidden border-t border-[#3f3e3d] bg-[#323130] text-[11px] leading-4 text-white">
      <span className="mt-px ml-[4px] font-semibold">Ready</span>
      <Svg w={15} h={13} className="mt-[4px] ml-[17px]">
        <path d="M14.500 6V.5H.5v11H6M.5 3.500h14M2.500 6.500h4M2.500 8.500h3" stroke="#fff" />
        <circle cx="10" cy="8.500" r="3.500" stroke="#fff" />
        <circle cx="10" cy="8.500" r="1.500" fill="#fff" />
      </Svg>
      <div className="ml-auto flex">
        <Btn label="Normal view" className="h-4 w-[40px] !items-start bg-[#484644] pt-[3px]">
          <Svg w={13} h={15}>
            <path d="M.5.5h12v14H.5zM4.500.5v14M8.500.5v14M.5 4.500h12M.5 9.500h12" stroke="#fff" />
          </Svg>
        </Btn>
        <Btn label="Page layout view" className="h-4 w-[40px] !items-start pt-[3px]">
          <Svg w={14} h={15}>
            <path d="M.5.5h13v14H.5zM3.500 3.500h7v9h-7zM5 5.500h4M5 7.500h4M5 9.500h4" stroke="#fff" />
          </Svg>
        </Btn>
        <Btn label="Page break view" className="h-4 w-[40px] !items-start pt-[3px]">
          <Svg w={14} h={15}>
            <path d="M.5.5h13v14H.5zM4.500.5v8M8.500.5v8M.5 8.500h8" stroke="#fff" />
          </Svg>
        </Btn>
      </div>
      <Btn label="Zoom out" className="mt-[6px] ml-[5px]">
        <Svg w={9} h={9}>
          <path d="M0 4.500h9" stroke="#c8c6c4" />
        </Svg>
      </Btn>
      <input
        type="range"
        aria-label="Zoom"
        defaultValue="50"
        className="mt-[5px] ml-[5px] h-[12px] w-[100px] appearance-none bg-transparent bg-[linear-gradient(#fff,#fff)] bg-[length:100%_1px] bg-center bg-no-repeat [&::-webkit-slider-thumb]:h-[12px] [&::-webkit-slider-thumb]:w-[5px] [&::-webkit-slider-thumb]:appearance-none [&::-webkit-slider-thumb]:bg-white"
      />
      <Btn label="Zoom in" className="mt-[6px] ml-[4px]">
        <Svg w={9} h={9}>
          <path d="M0 4.500h9M4.500 0v9" stroke="#c8c6c4" />
        </Svg>
      </Btn>
      <span className="mt-px ml-[13px] w-[41px]">100%</span>
    </footer>
  );
}

export default function App() {
  return (
    <div className="relative flex h-screen flex-col overflow-hidden bg-[#262626] font-['Noto_Sans','Open_Sans',sans-serif] text-white">
      <TitleBar />
      <TabBar />
      <Ribbon />
      <FormulaBar />
      <Sheet />
      <SheetTabs />
      <StatusBar />
    </div>
  );
}
